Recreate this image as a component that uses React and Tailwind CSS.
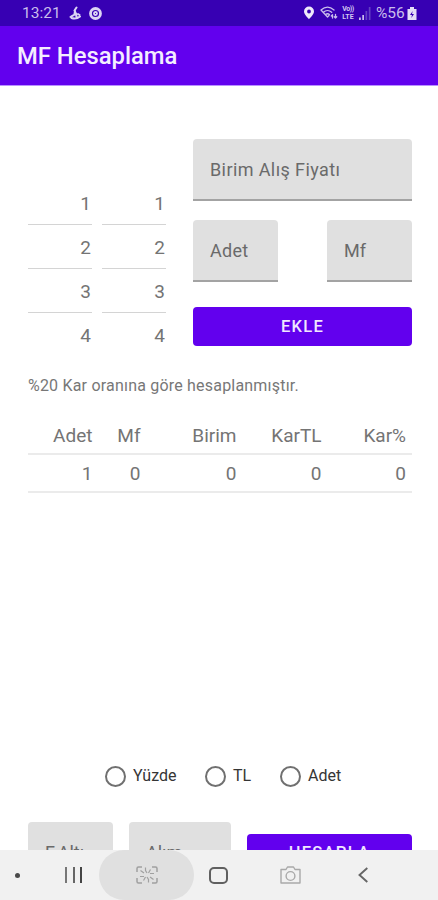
const line = { fill: 'none', strokeLinecap: 'round', strokeLinejoin: 'round' };

function StatusBar() {
  return (
    <div className="flex h-[26px] shrink-0 items-center bg-[#3700b3] pr-[20px] pl-[22px] text-[15px] leading-[26px] text-[#c9bdec]">
      <span className="w-[39px] text-[15.5px]">13:21</span>
      <svg className="ml-[8px]" width="13" height="14" viewBox="0 0 13 14" {...line} stroke="#dcd4f4" strokeWidth="2">
        <path d="M7.500 1.500 5.500 4.500l1.300 3M6 5 5.500 8M1.500 11c2.500-2 4-2 5.500-3.500l.5 3.500M2.500 12c3 1 6 .5 8.500-1.500M9 8l1.500 1" />
      </svg>
      <svg className="ml-[7px]" width="13" height="13" viewBox="0 0 13 13" fill="none" stroke="#dcd4f4">
        <circle cx="6.5" cy="6.5" r="5" strokeWidth="2.8" />
        <circle cx="6.5" cy="6.5" r="1.500" strokeWidth="1.8" />
      </svg>
      <div className="flex-1" />
      <svg width="12" height="14" viewBox="0 0 12 14" fill="#eee9fa">
        <path fillRule="evenodd" d="M6 .6a5 5 0 0 0-5 5C1 8.700 6 13.200 6 13.200s5-4.500 5-7.600A5 5 0 0 0 6 .6Zm0 3a1.900 1.900 0 1 1 0 3.800 1.900 1.900 0 0 1 0-3.800Z" />
      </svg>
      <svg className="ml-[5px]" width="18" height="14" viewBox="0 0 18 14" {...line} stroke="#c9bdec" strokeWidth="1.300">
        <path d="M1 4c4-3.500 9-3.500 13 0M3.300 6.300c2.500-2.200 6-2.200 8.400 0M5.600 8.600c1.200-1 2.700-1 3.800 0M1 4l6.500 7 1.500-1.500M12.500 12V9m-1.200 1 1.200-1.200M15.500 8.500V12m-1.200-1.200 1.200 1.200 1.200-1.200" />
      </svg>
      <div className="ml-[3px] w-[14px] text-center text-[7px] leading-[8px] font-bold text-[#d2c8f0]">
        <div className="tracking-[-0.5px]">Vo))</div>
        <div>LTE</div>
      </div>
      <svg className="ml-[4px]" width="12" height="13" viewBox="0 0 12 13">
        <path fill="#c9bdec" d="M0 10.500h1.800V13H0zM3.300 8H5v5H3.300z" />
        <path fill="#6440c4" d="M6.500 4h1.700v9H6.500zM9.800 0h1.700v13H9.800z" />
      </svg>
      <span className="ml-[5px] w-[30px] text-[15.500px]">%56</span>
      <svg className="mr-[1px] ml-[1px]" width="10" height="13" viewBox="0 0 10 13">
        <path fill="#e4def6" d="M3 0h4v2h2.500v11H.5V2H3z" />
        <path fill="#3700b3" d="M5.700 4 3 8h2l-.7 3L7 7H5z" />
      </svg>
    </div>
  );
}

function Field({ label, className }) {
  return (
    <div className={`flex h-[62px] items-center rounded-t-[4px] border-b-2 border-[#a3a3a3] bg-[#e0e0e0] pl-[17px] text-[18px] text-[#6a6a6a] ${className}`}>
      {label}
    </div>
  );
}

function NumberColumn() {
  return (
    <div className="w-[64px] text-right text-[19px] text-[#747474]">
      {[1, 2, 3, 4].map((n) => (
        <div key={n} className={`h-[44px] pr-px leading-[45px] ${n < 4 ? 'border-b border-[#d4d4d4]' : ''}`}>{n}</div>
      ))}
    </div>
  );
}

function TableRow({ cells, className }) {
  return (
    <div className={`grid grid-cols-[64.5px_48px_96px_85px_84.5px] border-b-2 border-[#ebebeb] text-right text-[19px] text-[#747474] ${className}`}>
      {cells.map((cell, i) => <div key={i}>{cell}</div>)}
    </div>
  );
}

function Radio({ label, className }) {
  return (
    <div className={`flex items-center gap-[7px] ${className}`}>
      <span className="size-[21px] rounded-full border-2 border-[#707070]" />
      <span>{label}</span>
    </div>
  );
}

function NavigationBar() {
  return (
    <div className="flex h-[50px] shrink-0 items-center bg-[#f1f1f1]">
      <div className="ml-[15px] size-[5px] rounded-full bg-[#4a4a4a]" />
      <div className="ml-[45px] flex h-[16px] w-[17px] justify-between">
        <span className="w-[2px] bg-[#777]" />
        <span className="w-[2px] bg-[#666]" />
        <span className="w-[2px] bg-[#444]" />
      </div>
      <div className="ml-[17px] flex h-[50px] w-[95px] items-center justify-center rounded-full bg-[#e0e0e0]">
        <svg width="22" height="18" viewBox="0 0 22 18" fill="none" stroke="#a0a0a0" strokeWidth="1.500">
          <path d="M1 6V2.500Q1 1 2.500 1H6M16 1h3.500Q21 1 21 2.500V6M1 12v3.500Q1 17 2.500 17H6M16 17h3.500Q21 17 21 15.500V12" />
          <path strokeWidth="1.200" d="M9.500 1.500v3L11 7M14.500 3.500 12.500 7M18 7.500h-4M14 11l3.500 2.500M12.500 16.500v-3L11 11M7.500 14.500l2-3.500M4 10.500h4M4.500 4.500 8 7" />
        </svg>
      </div>
      <div className="ml-[15px] h-[17px] w-[19px] rounded-[5px] border-2 border-[#606060]" />
      <svg className="ml-[52px]" width="21" height="18" viewBox="0 0 21 18" {...line} stroke="#a9a9a9" strokeWidth="1.400">
        <path d="M1 3.500h5L7.500 1h6L15 3.500h5V17H1z" />
        <circle cx="10.500" cy="10" r="4.400" />
      </svg>
      <svg className="ml-[57px]" width="10" height="16" viewBox="0 0 10 16" fill="none" stroke="#666" strokeWidth="1.900">
        <path d="M9.300 1 1.500 8l7.800 7" />
      </svg>
    </div>
  );
}

export default function App() {
  return (
    <div className="flex h-[900px] w-[438px] flex-col overflow-hidden bg-white font-['Roboto',sans-serif]">
      <StatusBar />
      <header className="flex h-[60px] shrink-0 items-center border-b border-[#b990ff] bg-[#6200ee] pl-[17px] text-[23.800px] font-medium text-[#f4edff]">
        <span className="pt-[3px]">MF Hesaplama</span>
      </header>

      <main className="flex min-h-0 flex-1 flex-col overflow-hidden pr-[26px] pl-[28px]">
        <div className="mt-[53px] flex justify-between">
          <div className="flex gap-[10px] pt-[42px]">
            <NumberColumn />
            <NumberColumn />
          </div>
          <div className="w-[219px]">
            <Field label="Birim Alış Fiyatı" className="w-full tracking-[0.4px]" />
            <div className="mt-[19px] flex justify-between">
              <Field label="Adet" className="w-[85px] tracking-[0.3px]" />
              <Field label="Mf" className="w-[85px]" />
            </div>
            <div className="mt-[25px] flex h-[39px] items-center justify-center rounded-[4px] bg-[#6200ee] text-[16.500px] font-medium tracking-[1.300px] text-[#f0e7ff]">
              <span className="pt-px">EKLE</span>
            </div>
          </div>
        </div>

        <p className="mt-[17px] h-[24px] text-[16px] leading-[24px] tracking-[0.2px] text-[#777]">%20 Kar oranına göre hesaplanmıştır.</p>
        <TableRow className="mt-[19px] h-[38px] leading-[38px]" cells={['Adet', 'Mf', 'Birim', 'KarTL', 'Kar%']} />
        <TableRow className="h-[38px] leading-[38px]" cells={['1', '0', '0', '0', '0']} />

        <div className="mt-[271px] ml-[77px] flex h-[24px] items-center text-[16px] text-[#353535]">
          <Radio label="Yüzde" className="w-[100px]" />
          <Radio label="TL" className="w-[75px]" />
          <Radio label="Adet" />
        </div>

        <div className="mt-[34px] flex shrink-0 items-start">
          <Field label="F.Altı" className="w-[85px]" />
          <Field label="Alım" className="ml-[16px] w-[102px]" />
          <div className="mt-[12px] ml-[16px] flex h-[39px] w-[165px] items-center justify-center rounded-[4px] bg-[#6200ee] text-[16.500px] font-medium tracking-[1.300px] text-[#f0e7ff]">HESAPLA</div>
        </div>
      </main>
      <NavigationBar />
    </div>
  );
}
